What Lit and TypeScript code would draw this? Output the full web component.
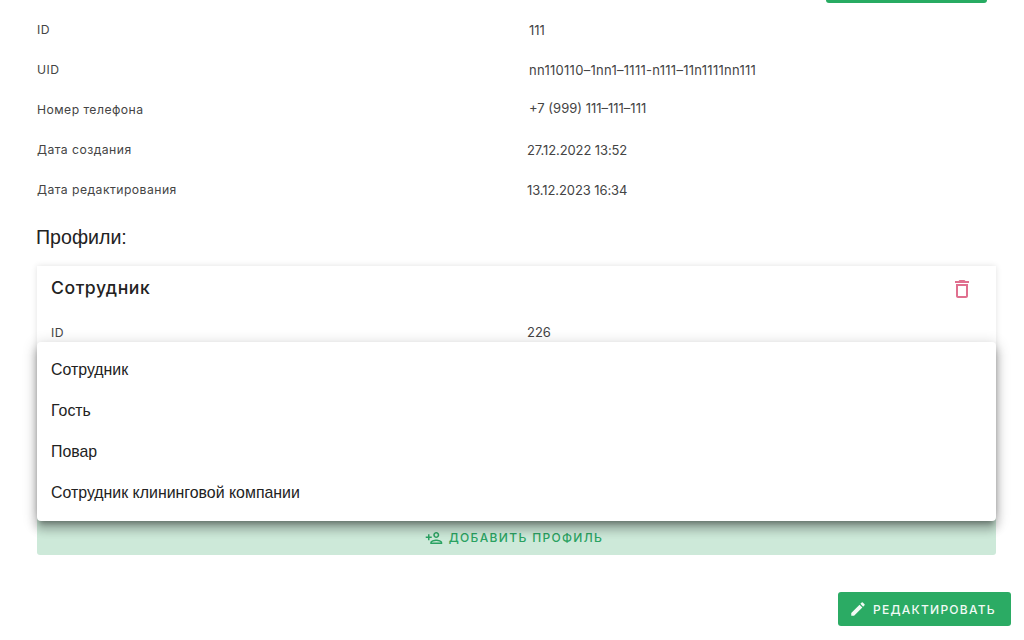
import { LitElement, html, css, svg } from "lit";
import { customElement } from "lit/decorators.js";

const icon = (d: string, size: number) => html`<svg width=${size} height=${size} viewBox="0 0 24 24" fill="currentColor">${svg`<path d=${d}></path>`}</svg>`;
const TRASH = "M6 19c0 1.1.9 2 2 2h8c1.1 0 2-.9 2-2V7H6v12zM8 9h8v10H8V9zm7.5-5l-1-1h-5l-1 1H5v2h14V4z";
const ADD = "M15 6c1.1 0 2 .9 2 2s-.9 2-2 2-2-.9-2-2 .9-2 2-2m0 10c2.7 0 5.8 1.29 6 2H9c.23-.72 3.31-2 6-2m0-12c-2.21 0-4 1.79-4 4s1.79 4 4 4 4-1.79 4-4-1.79-4-4-4zm0 10c-2.67 0-8 1.34-8 4v2h16v-2c0-2.66-5.33-4-8-4zM6 10V7H4v3H1v2h3v3h2v-3h3v-2H6z";
const PEN = "M3 17.25V21h3.75L17.81 9.94l-3.75-3.75L3 17.25zM20.71 7.04a.996.996 0 0 0 0-1.41l-2.34-2.34a.996.996 0 0 0-1.41 0l-1.83 1.83 3.75 3.75 1.83-1.83z";

const rows = [
  ["ID", "111", "a"],
  ["UID", "nn110110–1nn1–1111-n111–11n1111nn111", "a wide"],
  ["Номер телефона", "+7 (999) 111–111–111", "a up"],
  ["Дата создания", "27.12.2022 13:52", "b"],
  ["Дата редактирования", "13.12.2023 16:34", "b"],
];
const options = ["Сотрудник", "Гость", "Повар", "Сотрудник клининговой компании"];

@customElement("app-root")
export class AppRoot extends LitElement {
  static styles = css`
    :host { display: block; width: 1024px; height: 640px; overflow: hidden; background: #fff; font-family: "Inter", "Noto Sans", sans-serif; color: #444; }
    .page { display: flex; flex-direction: column; height: 640px; box-sizing: border-box; padding: 0 13px 14px 37px; }
    .strip-row { display: flex; justify-content: flex-end; height: 3px; margin-bottom: 7px; padding-right: 24px; }
    .strip { width: 161px; height: 3px; background: #27ab62; border-radius: 0 0 3px 3px; }
    .info { width: 959px; margin-top: -0.5px; }
    .row { display: grid; grid-template-columns: 492px 1fr; height: 40px; align-items: center; font-size: 12.2px; letter-spacing: 0.45px; }
    .row.sub { height: 22px; }
    .val { font-family: "Inter", sans-serif; font-size: 13px; letter-spacing: 0; }
    .val.wide { letter-spacing: 0.28px; }
    .val.b { margin-left: -2px; letter-spacing: -0.1px; }
    .val.up { position: relative; top: -2px; }
    h2 { margin: 15.5px 0 0 -1px; height: 24px; font: 400 19.6px/24px "Liberation Sans", Arial, sans-serif; color: #222; }
    .stack { position: relative; width: 959px; margin-top: 17px; }
    .card { height: 249px; box-sizing: border-box; padding: 9px 14px 0; box-shadow: 0 0 6px rgba(0,0,0,.12); background: #fff; }
    .card-head { display: flex; justify-content: space-between; align-items: center; height: 24px; }
    .card-title { font-size: 17.6px; font-weight: 450; letter-spacing: 0.55px; color: #222; }
    .trash { color: #e0708f; display: flex; margin-top: 3px; margin-right: 8px; }
    .card .row { margin-top: 22px; grid-template-columns: 476px 1fr; }
    .add { height: 40px; box-sizing: border-box; padding: 5px 3px 0 0; display: flex; align-items: center; justify-content: center; gap: 6px; background: #cde9d9; border-radius: 0 0 3px 3px; color: #2aa262; font-size: 12px; font-weight: 500; letter-spacing: 1.35px; }
    .add svg { margin-left: -2px; }
    .menu { position: absolute; left: 0; right: 0; top: 76px; height: 179px; box-sizing: border-box; padding-top: 7px; background: #fff; border-radius: 4px; color: #222; font: 400 15.9px "Liberation Sans", Arial, sans-serif; box-shadow: 0 5px 5px -3px rgba(0,0,0,.3), 0 8px 10px 1px rgba(0,0,0,.2), 0 3px 14px 2px rgba(0,0,0,.16); }
    .opt { height: 41px; display: flex; align-items: center; padding-left: 14px; }
    .foot { margin-top: auto; display: flex; justify-content: flex-end; }
    .edit { width: 173px; height: 34px; box-sizing: border-box; display: flex; align-items: center; justify-content: flex-start; padding-left: 11px; gap: 6px; background: #2bab64; border-radius: 3px; color: #f2faf5; font-size: 12px; font-weight: 500; letter-spacing: 1.25px; }
  `;

  render() {
    return html`<div class="page">
      <div class="strip-row"><div class="strip"></div></div>
      <div class="info">
        ${rows.map(([k, v, c]) => html`<div class="row"><span>${k}</span><span class="val ${c}">${v}</span></div>`)}
      </div>
      <h2>Профили:</h2>
      <div class="stack">
        <div class="card">
          <div class="card-head">
            <span class="card-title">Сотрудник</span>
            <span class="trash">${icon(TRASH, 24)}</span>
          </div>
          <div class="row sub"><span>ID</span><span class="val">226</span></div>
        </div>
        <div class="add">${icon(ADD, 18)}<span>ДОБАВИТЬ ПРОФИЛЬ</span></div>
        <div class="menu">${options.map((o) => html`<div class="opt">${o}</div>`)}</div>
      </div>
      <div class="foot"><div class="edit">${icon(PEN, 18)}<span>РЕДАКТИРОВАТЬ</span></div></div>
    </div>`;
  }
}
